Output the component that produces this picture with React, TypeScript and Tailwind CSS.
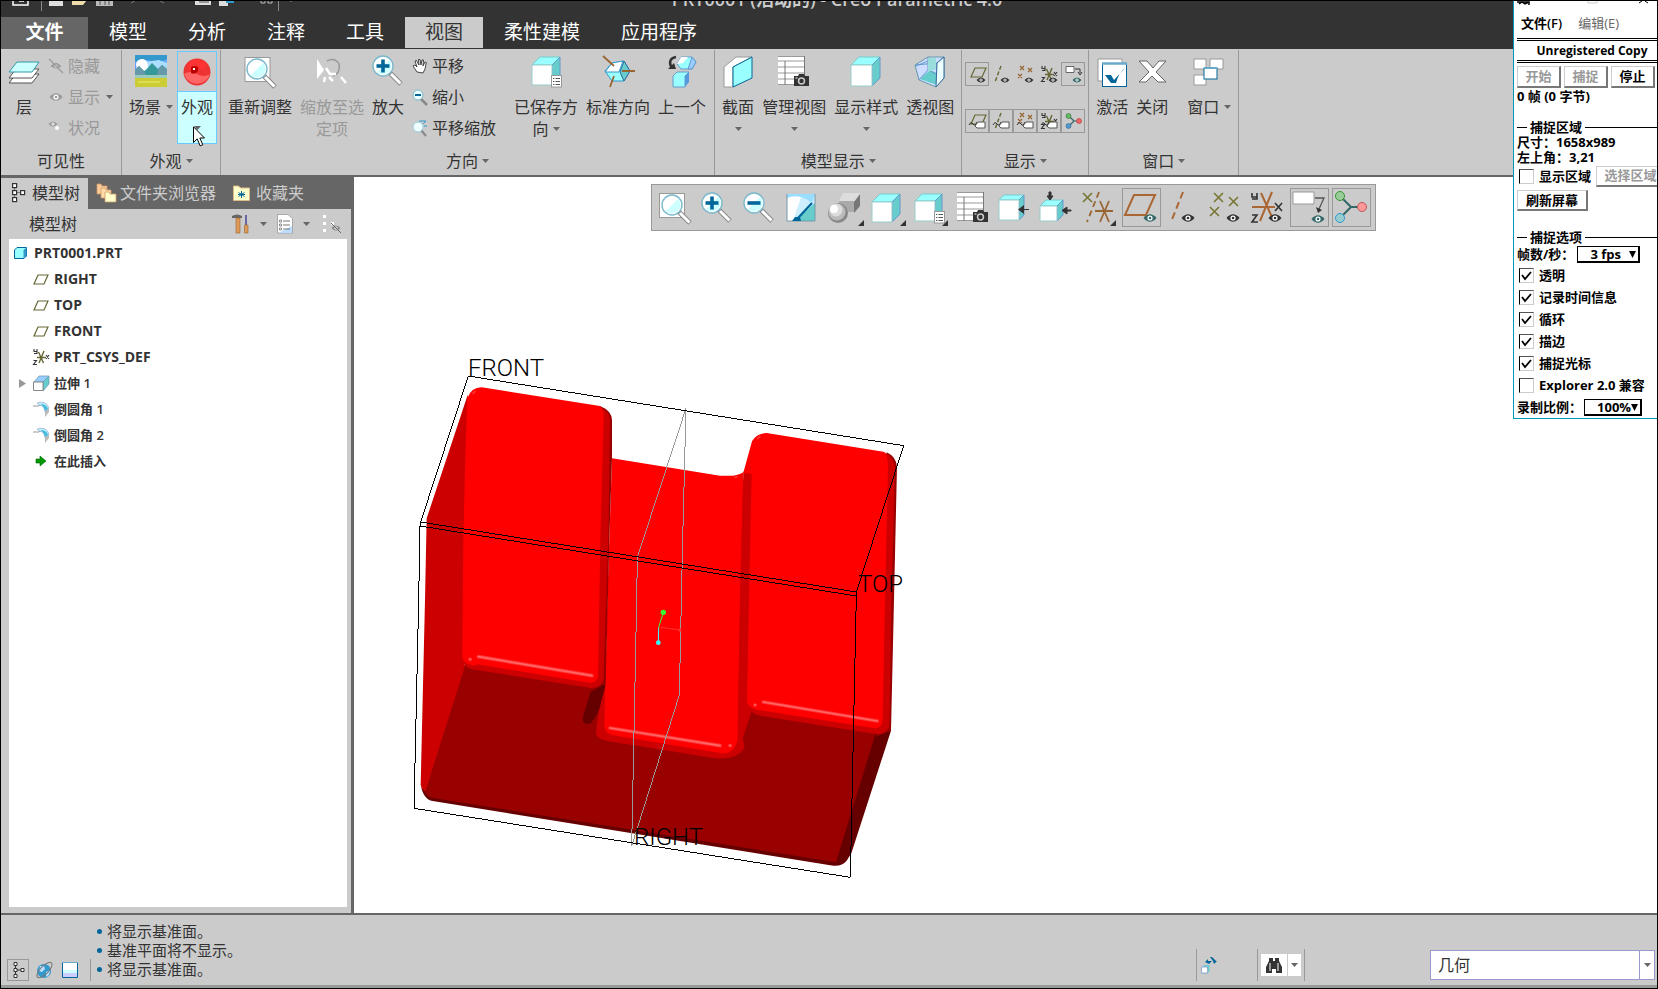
import type { ReactNode } from "react";

type IconProps = {
  w?: number;
  h?: number;
  children: ReactNode;
};

function Icon({ w = 32, h = 34, children }: IconProps) {
  return (
    <svg aria-hidden="true" width={w} height={h} viewBox={`0 0 ${w} ${h}`} fill="none" className="block shrink-0 overflow-visible">
      {children}
    </svg>
  );
}

function Chevron() {
  return (
    <svg aria-hidden="true" width="7" height="4" viewBox="0 0 7 4" className="shrink-0">
      <path d="M0 0h7L3.5 4z" fill="#666" />
    </svg>
  );
}

/* ---------- shared drawings ---------- */

function Eye({ x, y, color = "#333" }: { x: number; y: number; color?: string }) {
  return (
    <g transform={`translate(${x} ${y})`}>
      <path d="M-6.5 0Q0-7.5 6.5 0Q0 7.5-6.5 0z" fill={color} />
      <circle r="2.6" fill="#fff" />
      <circle r="1.3" fill={color} />
    </g>
  );
}

function SmallEye({ x, y, color = "#333" }: { x: number; y: number; color?: string }) {
  return (
    <g transform={`translate(${x} ${y})`}>
      <path d="M-4.5 0Q0-5 4.5 0Q0 5-4.5 0z" fill={color} />
      <circle r="1.6" fill="#fff" />
      <circle r=".7" fill={color} />
    </g>
  );
}

function Lens({ x, y, sign }: { x: number; y: number; sign?: "+" | "-" }) {
  return (
    <g transform={`translate(${x} ${y})`}>
      <path d="M7 7l11 11" stroke="#888" strokeWidth="5" />
      <path d="M8 8l9.5 9.5" stroke="#fff" strokeWidth="3" />
      <circle r="10" fill="#fff" stroke="#7ab8cc" strokeWidth="1.4" />
      <path d="M-6 6L6-6A8 8 0 0 1 4 7A8 8 0 0 1-6 6z" fill="#cff" />
      {sign && <path d="M-6.5 0h13" stroke="#069" strokeWidth="3.6" />}
      {sign === "+" && <path d="M0-6.5v13" stroke="#069" strokeWidth="3.6" />}
    </g>
  );
}

function Cube({ x, y, w, h, d }: { x: number; y: number; w: number; h: number; d: number }) {
  return (
    <g transform={`translate(${x} ${y})`} strokeWidth="1" strokeLinejoin="round">
      <path d={`M0 ${d}L${d} 0H${w + d}L${w} ${d}z`} fill="#9ff" stroke="#7cc" />
      <path d={`M${w} ${d}L${w + d} 0V${h}L${w} ${h + d}z`} fill="#6cc" stroke="#69c" />
      <rect y={d} width={w} height={h} fill="#fff" stroke="#9cc" />
    </g>
  );
}

function Camera({ x, y }: { x: number; y: number }) {
  return (
    <g transform={`translate(${x} ${y})`}>
      <path d="M0 2h4l1-2h5l1 2h4v10H0z" fill="#333" />
      <circle cx="7.5" cy="7" r="3.7" fill="#ccc" />
      <circle cx="7.5" cy="7" r="2.2" fill="#333" />
      <path d="M1.5 4h2" stroke="#fff" />
    </g>
  );
}

function ListBadge({ x, y }: { x: number; y: number }) {
  return (
    <g transform={`translate(${x} ${y})`}>
      <rect x=".5" y=".5" width="10" height="11.5" fill="#fff" stroke="#999" />
      <path d="M2 3.5h1.4M4.5 3.5H9M2 6.5h1.4M4.5 6.5H9M2 9.5h1.4M4.5 9.5H9" stroke="#555" />
    </g>
  );
}

function ViewTable({ x, y }: { x: number; y: number }) {
  return (
    <g transform={`translate(${x} ${y})`}>
      <rect width="27" height="29" fill="#fff" />
      <path d="M0 .5h27M0 5h27M0 11h27M0 17h27M0 23h27M0 28.5h18" stroke="#999" />
      <path d="M7 5v24M26.5 0v20" stroke="#777" />
      <Camera x={16} y={18} />
    </g>
  );
}

function Tag({ x, y }: { x: number; y: number }) {
  return (
    <g transform={`translate(${x} ${y})`}>
      <path d="M-6 3q2-4 4-1t4-2" stroke="#333" />
      <path d="M0 4l3-4h7v6H2z" fill="#fff" stroke="#555" />
    </g>
  );
}

function Triad() {
  return (
    <>
      <path d="M4 3l5 5-5 5M9 8h7" stroke="#366" strokeWidth="1.2" />
      <circle cx="3.5" cy="3" r="2.5" fill="#6b6" stroke="#363" strokeWidth=".6" />
      <circle cx="3.5" cy="13" r="2.5" fill="#59c" stroke="#369" strokeWidth=".6" />
      <circle cx="14" cy="8" r="2.5" fill="#e66" stroke="#a33" strokeWidth=".6" />
    </>
  );
}

function Csys({ color = "#996633" }: { color?: string }) {
  return (
    <>
      <path d="M4 8.5h9M6 14l5-12M5.5 3l5 11" stroke={color} strokeWidth="1.4" />
      <path d="M1 0v2.500h3M4 0v4.500h-3M13 6l3 4m0-4l-3 4M.5 11.500h3l-3 4h3.500" stroke="#333" strokeWidth="1.1" />
    </>
  );
}

function TreeNodes() {
  return (
    <g stroke="#333" fill="#fff" strokeWidth="1.2">
      <path d="M2.500 4v11M3 9.500h6" stroke="#777" />
      <rect x=".6" y=".6" width="4" height="4" />
      <rect x=".6" y="7.600" width="4" height="4" />
      <rect x=".6" y="14.600" width="4" height="4" />
      <rect x="8.600" y="7.600" width="4" height="4" />
    </g>
  );
}

/* ---------- ribbon ---------- */

type BigButtonProps = {
  icon: ReactNode;
  label: string;
  second?: string;
  menu?: "side" | "below";
  disabled?: boolean;
};

function BigButton({ icon, label, second, menu, disabled }: BigButtonProps) {
  return (
    <button
      type="button"
      disabled={disabled}
      className={`flex shrink-0 flex-col items-center pt-[5px] text-base leading-[22px] ${disabled ? "text-[#999]" : "text-[#333]"}`}
    >
      <span className="mb-[7px]">{icon}</span>
      <span className="flex items-center gap-[5px]">
        {label}
        {menu === "side" && <Chevron />}
      </span>
      <span className="flex h-[22px] items-center gap-1">
        {second}
        {menu === "below" && <Chevron />}
      </span>
    </button>
  );
}

function SmallButton({ icon, label, menu, disabled }: { icon: ReactNode; label: string; menu?: boolean; disabled?: boolean }) {
  return (
    <button
      type="button"
      disabled={disabled}
      className={`flex h-[31px] items-center text-base leading-[22px] ${disabled ? "text-[#999]" : "text-[#333]"}`}
    >
      <span className="mr-1 w-4">{icon}</span>
      {label}
      {menu && (
        <span className="ml-1.5 flex">
          <Chevron />
        </span>
      )}
    </button>
  );
}

function Group({ title, menu, className = "", children }: { title: string; menu?: boolean; className?: string; children: ReactNode }) {
  return (
    <section className="mt-px flex shrink-0 flex-col border-r border-[#999]">
      <div className={`flex h-[97px] items-start ${className}`}>{children}</div>
      <h2 className="flex h-7 items-center justify-center gap-1 text-base leading-[22px]">
        {title}
        {menu && <Chevron />}
      </h2>
    </section>
  );
}

const layersIcon = (
  <Icon>
    <g stroke="#555">
      <path d="M1 28l7-9h23l-7 9z" fill="#fff" />
      <path d="M1 23l7-9h23l-7 9z" fill="#fff" />
      <path d="M1 17L9 7h22l-7 10z" fill="#cff" stroke="#39a" />
    </g>
  </Icon>
);

const sceneIcon = (
  <Icon>
    <rect width="32" height="32" fill="#69f" />
    <path d="M0 0h32v7H0z" fill="#39c" />
    <path d="M0 7q8-4 16-1t16-2v4H0z" fill="#6af" />
    <path d="M9 7l15-2 8 3v10H6z" fill="#adf" />
    <path d="M1 9q1-5 7-5 5 1 5 8l-3 4H2z" fill="#fff" />
    <path d="M0 20V15l4-4 5 5 2-1 6-7 6 6 4-4 5 4v6z" fill="#399" />
    <path d="M0 15l4-4 5 5 2 4H0zM23 14l4-4 5 4v6H22z" fill="#69a" />
    <path d="M0 20h32v12H0z" fill="#cc3" />
    <path d="M0 20h32v3H0z" fill="#9cb" />
    <path d="M3 26h22v2H3z" fill="#dd5" />
  </Icon>
);

const fitIcon = (
  <Icon>
    <rect x="1" y="2.500" width="25" height="24" fill="#fff" stroke="#999" />
    <Lens x={13} y={14} />
  </Icon>
);

const zoomSelIcon = (
  <Icon>
    <path d="M1 4v20l7-9z" fill="#fff" />
    <path d="M11 6q8-4 12 3 2 9-6 12" stroke="#999" strokeWidth="1.500" />
    <path d="M10 13l4 6h6M9 22l-1 5M13 22l4 4M25 22l5 6" stroke="#fff" strokeWidth="2.500" />
  </Icon>
);

const savedIcon = (
  <Icon>
    <Cube x={2} y={2} w={20} h={20} d={8} />
    <ListBadge x={21} y={20} />
  </Icon>
);

const stdIcon = (
  <Icon>
    <path d="M10 8l12-2 6 10-6 10H10L3 16z" fill="#9ff" stroke="#39c" />
    <path d="M22 6l6 10-6 10-4-9z" fill="#6cc" stroke="#369" />
    <path d="M3 17l7-9 11-2-4 11z" fill="#fff" stroke="#39c" />
    <path d="M1 1l11 10M20 16h13M12 21L8 32" stroke="#963" strokeWidth="1.800" />
  </Icon>
);

const prevIcon = (
  <Icon>
    <path d="M10 2C3 3 3 9 6 13" stroke="#333" strokeWidth="2.500" />
    <path d="M2 14l8 0-2-6z" fill="#333" />
    <path d="M11 9l4-7h11l4 5-4 7H15z" fill="#9ff" stroke="#69c" />
    <path d="M11 9l4-7h7l-5 6z" fill="#fff" />
    <path d="M22 14l4-12 4 5-4 7z" fill="#9cf" stroke="#69c" />
    <path d="M7 21l4-4h12l-4 4v11H7z" fill="#9ff" stroke="#69c" />
    <path d="M19 21l4-4v10l-4 5z" fill="#59d" />
  </Icon>
);

const sectionIcon = (
  <Icon>
    <path d="M2 12L14 2h16L11 12v20H2z" fill="#fff" stroke="#999" />
    <path d="M11 12L30 2v21L11 32z" fill="#9ff" stroke="#069" />
  </Icon>
);

const perspectiveIcon = (
  <Icon>
    <path d="M1 10L14 2h16v21l-8 9-17-7z" fill="#cdf" stroke="#69a" />
    <path d="M6 24l10-9 7 3v12z" fill="#6cc" />
    <path d="M1 10l22-2 7-6M23 8v22M14 2v13L5 25M14 15l16 8M2 11l12-5" stroke="#69c" />
    <path d="M14 3h8v11l-8 3z" fill="#9dd" />
    <path d="M23 8l7-6v21l-8 9z" fill="#eff" stroke="#369" />
  </Icon>
);

const activateIcon = (
  <Icon>
    <path d="M2 4h24v22H2z" fill="#fff" stroke="#999" />
    <rect x="6.500" y="8.500" width="24" height="23" fill="#fff" stroke="#069" />
    <path d="M6 8.500h25" stroke="#6ac" strokeWidth="2.500" />
    <path d="M9 20h6l3 5 11-12q-6 4-9 15h-5z" fill="#069" />
  </Icon>
);

const closeIcon = (
  <Icon>
    <path d="M3 6h8l6 7 6-7h7L20 17l10 10h-8l-6-6-6 6H3l10-10z" fill="#fff" stroke="#666" />
  </Icon>
);

const windowsIcon = (
  <Icon>
    <g fill="#fff" stroke="#999">
      <path d="M1 4h12v10H1zM17 4h13v10H17zM1 20h12v10H1z" />
      <rect x="11" y="13" width="13" height="11" stroke="#069" />
    </g>
    <path d="M11 13h13" stroke="#6ac" strokeWidth="2" />
  </Icon>
);

const planePath = "M6 2h11l-4 9H2z";

const displayRows: { id: string; boxed: boolean; art: ReactNode }[][] = [
  [
    { id: "plane", boxed: true, art: <><path d={planePath} stroke="#663" strokeWidth="1.200" /><SmallEye x={12} y={14} /></> },
    { id: "axis", boxed: false, art: <><path d="M8 0L2 16" stroke="#663" strokeWidth="1.400" strokeDasharray="4 2" /><SmallEye x={12} y={14} /></> },
    { id: "point", boxed: false, art: <><path d="M3 0l4 4m0-4L3 4M11 2l4 4m0-4l-4 4M1 8l4 4m0-4l-4 4" stroke="#963" strokeWidth="1.300" /><SmallEye x={12} y={14} /></> },
    { id: "csys", boxed: false, art: <><Csys color="#663" /><SmallEye x={12} y={14} /></> },
    { id: "note", boxed: true, art: <><path d="M1 .5h8v6H1z" fill="#fff" stroke="#666" /><path d="M10 3h5v4m-2-1l2 3 2-3" stroke="#333" /><SmallEye x={12} y={14} color="#366" /></> },
  ],
  [
    { id: "plane-tag", boxed: true, art: <><path d={planePath} stroke="#663" strokeWidth="1.200" /><Tag x={6} y={9} /></> },
    { id: "axis-tag", boxed: true, art: <><path d="M8 0L2 16" stroke="#663" strokeWidth="1.400" strokeDasharray="4 2" /><Tag x={6} y={9} /></> },
    { id: "point-tag", boxed: true, art: <><path d="M3 0l4 4m0-4L3 4M11 2l4 4m0-4l-4 4M1 6l4 4m0-4l-4 4" stroke="#963" strokeWidth="1.300" /><Tag x={6} y={9} /></> },
    { id: "csys-tag", boxed: true, art: <><Csys color="#663" /><Tag x={6} y={9} /></> },
    { id: "spin", boxed: true, art: <Triad /> },
  ],
];

function Ribbon() {
  return (
    <div className="flex h-32 border-b-2 border-[#666] bg-[#cbcbcb]">
      <Group title="可见性" className="w-[120px] pl-[7px]">
        <BigButton icon={layersIcon} label="层" />
        <div className="ml-2 flex flex-col">
          <SmallButton
            disabled
            label="隐藏"
            icon={<Icon w={16} h={16}><SmallEye x={8} y={8} color="#999" /><path d="M1 1l14 14M3 9q5-7 10 0" stroke="#999" strokeWidth="1.200" /></Icon>}
          />
          <SmallButton disabled menu label="显示" icon={<Icon w={16} h={16}><Eye x={8} y={8} color="#999" /></Icon>} />
          <SmallButton disabled label="状况" icon={<Icon w={16} h={16}><SmallEye x={5} y={4} color="#999" /><circle cx="9" cy="8" r="2" fill="#fff" /></Icon>} />
        </div>
      </Group>

      <Group title="外观" menu className="w-[98px] pl-[7px]">
        <BigButton icon={sceneIcon} label="场景" menu="side" />
        <button type="button" className="relative ml-1 mt-px flex w-10 shrink-0 flex-col items-center border border-[#6cf] text-base leading-[22px]">
          <span className="flex h-10 w-full items-center justify-center border-b border-[#6cf]">
            <Icon w={28} h={28}>
              <circle cx="14" cy="14" r="13.500" fill="#e33" />
              <path d="M1 16q6-4 13 0t13 0a13.500 13.500 0 0 1-26 0z" fill="#f66" />
              <path d="M4 6q9-9 20 0l-4 6q-6-5-15 0z" fill="#f33" />
              <path d="M8 9q3-2 7 0v4q-3 4-7 2z" fill="#b00" />
              <path d="M10 10h2v2h-2z" fill="#fff" />
            </Icon>
          </span>
          <span className="flex h-[51px] w-full flex-col items-center bg-[#cff] pt-1">
            <span>外观</span>
            <span className="flex h-5 items-center">
              <Chevron />
            </span>
          </span>
          <svg aria-hidden="true" width="12" height="21" viewBox="0 0 12 21" className="pointer-events-none absolute left-[15px] top-[74px]">
            <path d="M.5.8v15.700l3.700-3.600 3 7 2.600-1.200-3-6.700h4.700z" fill="#fff" stroke="#000" />
          </svg>
        </button>
      </Group>

      <Group title="方向" menu className="gap-2 pl-[7px] pr-2">
        <BigButton icon={fitIcon} label="重新调整" />
        <BigButton icon={zoomSelIcon} label="缩放至选" second="定项" disabled />
        <BigButton icon={<Icon><Lens x={11} y={11} sign="+" /></Icon>} label="放大" />
        <div className="mr-2.5 flex flex-col">
          <SmallButton
            label="平移"
            icon={<Icon w={16} h={16}><path d="M5 14L1 8l2-1 2 2-2-6 1.500-.5L7 7l-.5-5.500H8L9 7l1-5h1.500L11 8l2-4 1.300.5L13 11l-2 4z" fill="#fff" stroke="#333" strokeWidth=".9" /></Icon>}
          />
          <SmallButton
            label="缩小"
            icon={<Icon w={16} h={16}><path d="M9 10l6 6" stroke="#888" strokeWidth="2.500" /><circle cx="6" cy="6" r="5" fill="#eff" stroke="#7ab8cc" /><path d="M3 6h6" stroke="#069" strokeWidth="2" /></Icon>}
          />
          <SmallButton
            label="平移缩放"
            icon={<Icon w={16} h={16}><path d="M9 10l5 6" stroke="#888" strokeWidth="2" /><circle cx="6" cy="7" r="5" fill="#eff" stroke="#9cd" /><path d="M7 1h7l-3 3M12 6l3 0" stroke="#39c" /></Icon>}
          />
        </div>
        <BigButton icon={savedIcon} label="已保存方" second="向" menu="below" />
        <BigButton icon={stdIcon} label="标准方向" />
        <BigButton icon={prevIcon} label="上一个" />
      </Group>

      <Group title="模型显示" menu className="gap-2 px-[7px]">
        <BigButton icon={sectionIcon} label="截面" menu="below" />
        <BigButton icon={<Icon><ViewTable x={0} y={1} /></Icon>} label="管理视图" menu="below" />
        <BigButton icon={<Icon><Cube x={1} y={2} w={21} h={21} d={8} /></Icon>} label="显示样式" menu="below" />
        <BigButton icon={perspectiveIcon} label="透视图" />
      </Group>

      <Group title="显示" menu className="flex-col gap-[23px] px-[3px] pt-3">
        {displayRows.map((row, rowIndex) => (
          <div key={rowIndex} className="flex">
            {row.map((item) => (
              <button
                key={item.id}
                type="button"
                aria-label={item.id}
                className={`grid size-6 place-items-center border ${item.boxed ? "border-[#999]" : "border-transparent"}`}
              >
                <Icon w={17} h={17}>{item.art}</Icon>
              </button>
            ))}
          </div>
        ))}
      </Group>

      <Group title="窗口" menu className="gap-2 px-[7px]">
        <BigButton icon={activateIcon} label="激活" />
        <BigButton icon={closeIcon} label="关闭" />
        <div className="ml-[11px]">
          <BigButton icon={windowsIcon} label="窗口" menu="side" />
        </div>
      </Group>
    </div>
  );
}

/* ---------- header ---------- */

const tabs = ["模型", "分析", "注释", "工具", "视图", "柔性建模", "应用程序"];

function Header() {
  return (
    <header className="h-12 bg-[#333]">
      <div className="grid h-4 grid-cols-[1fr_auto_1fr] overflow-hidden">
        <svg aria-hidden="true" width="300" height="11" viewBox="1 1 300 11" fill="none">
          <path d="M13 0v5h15V0M19 1h5" stroke="#fff" strokeWidth="1.500" />
          <path d="M41.500 0v11M278.500 0v11" stroke="#888" />
          <path d="M49 0h14v6H49zM195 0h16v5H195zM219 0h9v6H219z" fill="#ddd" />
          <path d="M72 0h15l-4 5H72z" fill="#eda" />
          <path d="M96 0h17v6H96z" fill="#bbb" />
          <path d="M100 1v4M105 1v4M109 1v4M199 2h10" stroke="#555" />
          <path d="M226 0h8v3h-8z" fill="#39c" />
          <path d="M131 3l4-2M160 1l4 2" stroke="#777" />
          <path d="M261 0h4v3h-4zM268 0h4v3h-4z" stroke="#bbb" />
          <path d="M290 1h2" stroke="#999" />
        </svg>
        <h1 className="-mt-2.5 pl-4 text-lg font-semibold leading-4 text-[#ccc]">PRT0001 (活动的) - Creo Parametric 4.0</h1>
      </div>
      <nav className="flex h-8 gap-px text-[19px] leading-[28px] text-white">
        <button type="button" className="w-[87px] shrink-0 bg-[#666] pb-0.5 font-bold">
          文件
        </button>
        {tabs.map((tab) => (
          <button
            key={tab}
            type="button"
            className={`shrink-0 px-5 pb-0.5 ${tab === "视图" ? "border-b border-[#333] bg-[#cbcbcb] text-[#333]" : ""}`}
          >
            {tab}
          </button>
        ))}
      </nav>
    </header>
  );
}

/* ---------- model tree ---------- */

const planeIcon = (
  <Icon w={16} h={16}>
    <path d="M5 4h10l-4 9H1z" stroke="#663" strokeWidth="1.200" />
  </Icon>
);

const roundIcon = (
  <Icon w={16} h={16}>
    <path d="M0 5h6l4-3" stroke="#999" />
    <path d="M4 2q9-3 12 5l-4 4q-1-7-6-7z" fill="#bef" stroke="#9ac" strokeWidth=".7" />
    <path d="M12 11l4-4v4l-4 5z" fill="#bbb" />
    <path d="M9 3q5 1 6 5l-3 2q-1-5-4-6z" fill="#4bd" />
  </Icon>
);

const treeItems: { label: string; zh?: boolean; expandable?: boolean; icon: ReactNode }[] = [
  { label: "RIGHT", icon: planeIcon },
  { label: "TOP", icon: planeIcon },
  { label: "FRONT", icon: planeIcon },
  { label: "PRT_CSYS_DEF", icon: <Icon w={16} h={16}><Csys color="#663" /></Icon> },
  {
    label: "拉伸 1",
    zh: true,
    expandable: true,
    icon: (
      <Icon w={16} h={16}>
        <path d="M1 7l5-6h10l-6 6z" fill="#9cf" stroke="#69a" strokeWidth=".7" />
        <path d="M10 7l6-6v8l-6 7z" fill="#6cc" stroke="#69a" strokeWidth=".7" />
        <path d="M.5 7h9.500v8.500H.5z" fill="#fff" stroke="#888" />
      </Icon>
    ),
  },
  { label: "倒圆角 1", zh: true, icon: roundIcon },
  { label: "倒圆角 2", zh: true, icon: roundIcon },
  {
    label: "在此插入",
    zh: true,
    icon: (
      <Icon w={16} h={16}>
        <path d="M3 6h4V3l6 5-6 5v-3H3z" fill="#090" stroke="#060" strokeWidth=".6" />
      </Icon>
    ),
  },
];

function ModelTree() {
  return (
    <aside className="flex w-[353px] shrink-0 flex-col border-r-3 border-[#666] bg-[#cbcbcb]">
      <div className="flex h-8 shrink-0 bg-[#666] pt-px text-base leading-[22px] text-[#ccc]">
        <button type="button" className="flex w-[87px] items-center gap-1.5 bg-[#cbcbcb] pb-0.5 pl-[11px] text-[#333]">
          <Icon w={14} h={20}>
            <TreeNodes />
          </Icon>
          模型树
        </button>
        <button type="button" className="ml-[9px] flex items-center gap-1 pb-0.5">
          <Icon w={19} h={19}>
            <g fill="#ffc" stroke="#c96" strokeWidth=".8">
              <path d="M0 1h4l1 2h5v8H0z" fill="#fc9" />
              <path d="M4 5h4l1 2h5v8H4z" fill="#fda" />
              <path d="M8 9h4l1 2h6v8H8z" />
            </g>
          </Icon>
          文件夹浏览器
        </button>
        <button type="button" className="ml-[17px] flex items-center gap-1.5 pb-0.5">
          <Icon w={17} h={16}>
            <path d="M.5 1h5l2 2H16.500v12.500H.5z" fill="#ffc" stroke="#db8" />
            <path d="M8.500 6v7M5.500 7.500l6 4M11.500 7.500l-6 4M5 9.500h7" stroke="#069" />
          </Icon>
          收藏夹
        </button>
      </div>
      <div className="flex h-[30px] shrink-0 items-center pl-7 pr-2 text-base leading-[22px]">
        <h2 className="flex-1">模型树</h2>
        <button type="button" aria-label="设置" className="flex items-center gap-2.5">
          <Icon w={18} h={20}>
            <path d="M0 2q5-3 10 0v2H0z" fill="#666" />
            <path d="M4 4h4v15H4z" fill="#d95" stroke="#963" strokeWidth=".6" />
            <path d="M14 1v10" stroke="#449" strokeWidth="1.500" />
            <path d="M12.500 11h3.500v8h-3.500z" fill="#d95" stroke="#963" strokeWidth=".6" />
          </Icon>
          <Chevron />
        </button>
        <button type="button" aria-label="显示" className="ml-2.5 flex items-center gap-2.5">
          <Icon w={16} h={20}>
            <path d="M.5.5H11l4.500 4V19H.5z" fill="#fff" stroke="#999" strokeWidth=".8" />
            <path d="M1 19l14-7v7z" fill="#bdf" />
            <path d="M6 7h7M6 11h7M6 15h7" stroke="#777" />
            <path d="M2.500 6h2v2h-2zM2.500 10h2v2h-2zM2.500 14h2v2h-2z" stroke="#777" strokeWidth=".8" />
          </Icon>
          <Chevron />
        </button>
        <button type="button" aria-label="隐藏" className="ml-3">
          <Icon w={21} h={20}>
            <path d="M1 1h3v3H1zM1 8h3v3H1zM1 15h3v3H1zM9 8h3v3H9z" fill="#fff" />
            <SmallEye x={14} y={14} color="#888" />
            <path d="M9 9l10 10" stroke="#666" />
          </Icon>
        </button>
      </div>
      <ul className="mb-1.5 ml-2 mr-1 flex-1 bg-white pt-px text-sm font-bold leading-5">
        <li className="flex h-[26px] items-center gap-[7px] pl-[5px]">
          <Icon w={13} h={12}>
            <path d="M.5 3L3 .5h9.500V9L10 11.500H.5z" fill="#9ff" stroke="#069" />
            <path d="M9.500 3L12.500.5V9l-3 2.500z" fill="#39c" />
          </Icon>
          PRT0001.PRT
        </li>
        {treeItems.map((item) => (
          <li key={item.label} className={`flex h-[26px] items-center ${item.zh ? "text-[13px] font-semibold" : ""}`}>
            <span className="flex w-6 justify-center pl-2.5">
              {item.expandable && (
                <svg aria-hidden="true" width="7" height="9" viewBox="0 0 7 9" className="mr-2 shrink-0">
                  <path d="M0 0l7 4.500L0 9z" fill="#999" />
                </svg>
              )}
            </span>
            <span className="mr-[5px]">{item.icon}</span>
            {item.label}
          </li>
        ))}
      </ul>
    </aside>
  );
}

/* ---------- graphics area ---------- */

const corner = <path d="M36 32v6h-6z" fill="#333" />;

const viewTools: { id: string; boxed?: boolean; art: ReactNode }[] = [
  { id: "refit", art: <><rect x="-.5" y="5.500" width="25" height="24" fill="#fff" stroke="#999" /><Lens x={12} y={17} /></> },
  { id: "zoom-in", art: <Lens x={10} y={15} sign="+" /> },
  { id: "zoom-out", art: <Lens x={10} y={15} sign="-" /> },
  {
    id: "repaint",
    art: (
      <>
        <path d="M1 6h28v27H1z" fill="#fff" />
        <path d="M16 6h13v27H7z" fill="#cef" />
        <path d="M29 15v18H8z" fill="#6cc" />
        <path d="M1 6h28L26 15Q14 5 1 10z" fill="#9df" />
        <path d="M1 6v27h28V6" stroke="#79a" />
        <path d="M26 15L12 30" stroke="#069" strokeWidth="2.200" />
        <path d="M6 33l3-4h5l1 4z" fill="#069" />
      </>
    ),
  },
  {
    id: "shade",
    art: (
      <>
        <path d="M11 13l4-8h17v3l-6 7H12z" fill="#ddd" />
        <path d="M11 13h15v11H12z" fill="#aaa" />
        <path d="M26 14l6-8v12l-6 7z" fill="#777" />
        <circle cx="10" cy="25" r="10" fill="#888" />
        <circle cx="9" cy="24" r="8.500" fill="#bbb" />
        <circle cx="8" cy="22" r="6.500" fill="#ddd" />
        <circle cx="6" cy="21" r="4" fill="#fff" />
        {corner}
      </>
    ),
  },
  { id: "style", art: <><Cube x={2} y={6} w={20} h={20} d={8} />{corner}</> },
  { id: "saved", art: <><Cube x={3} y={6} w={20} h={20} d={7} /><ListBadge x={22} y={23} />{corner}</> },
  { id: "views", art: <ViewTable x={3} y={4} /> },
  {
    id: "clip-back",
    art: (
      <>
        <Cube x={3} y={7} w={20} h={20} d={5} />
        <path d="M33 22h-5v4l-6-4.500 6-4.500v4h5z" fill="#333" />
      </>
    ),
  },
  {
    id: "clip",
    art: (
      <>
        <Cube x={2} y={12} w={17} h={15} d={6} />
        <path d="M13 4v4h2l-3 4-3-4h2V4zM33 23h-4v3l-5-3.500 5-3.500v3h4z" fill="#333" stroke="#333" />
      </>
    ),
  },
  {
    id: "datum",
    art: (
      <>
        <path d="M3 5l9 9m0-9l-9 9" stroke="#773" strokeWidth="1.600" />
        <path d="M19 4L7 34" stroke="#963" strokeWidth="1.800" strokeDasharray="6 4" />
        <path d="M15 23h18M20 34l9-21M20 13l9 21" stroke="#963" strokeWidth="1.800" />
        {corner}
      </>
    ),
  },
  { id: "planes", boxed: true, art: <><path d="M12 7h21l-9 20H3z" stroke="#a63" strokeWidth="2" /><Eye x={28} y={30} color="#366" /></> },
  { id: "axes", art: <><path d="M19 4L7 34" stroke="#a63" strokeWidth="2" strokeDasharray="7 4" /><Eye x={24} y={30} /></> },
  { id: "points", art: <><path d="M8 5l9 9m0-9l-9 9M23 9l9 9m0-9l-9 9M4 19l9 9m0-9l-9 9" stroke="#773" strokeWidth="1.600" /><Eye x={27} y={30} /></> },
  {
    id: "csys",
    art: (
      <>
        <path d="M4 19h23M12 33L24 4M13 5l11 24" stroke="#a63" strokeWidth="2" />
        <path d="M4 5v4h5M9 5v6H4M27 15l7 8m0-8l-7 8M4 27h5l-5 7h6" stroke="#333" strokeWidth="1.600" />
        <Eye x={27} y={30} />
      </>
    ),
  },
  {
    id: "notes",
    boxed: true,
    art: (
      <>
        <path d="M3 4h21v12H3z" fill="#fff" stroke="#999" />
        <path d="M25 10h9l-5 11" stroke="#555" strokeWidth="1.300" />
        <path d="M26 19l6 3-4 3z" fill="#333" />
        <Eye x={28} y={31} color="#366" />
      </>
    ),
  },
  {
    id: "spin-center",
    boxed: true,
    art: (
      <>
        <path d="M8 8l11 11L8 30M19 19h11" stroke="#366" strokeWidth="2" />
        <circle cx="8" cy="8" r="4.500" fill="#9c9" stroke="#393" />
        <circle cx="8" cy="30" r="4.500" fill="#9cc" stroke="#39c" />
        <circle cx="30" cy="19" r="4.500" fill="#f99" stroke="#b55" />
      </>
    ),
  },
];

function Viewport() {
  return (
    <main className="min-w-0 flex-1 bg-white">
      <div className="flex justify-center pl-[15px] pt-[7px]">
        <div className="flex gap-[3px] border border-[#999] bg-[#cbcbcb] py-[3px] pl-2 pr-1">
          {viewTools.map((tool) => (
            <button
              key={tool.id}
              type="button"
              aria-label={tool.id}
              className={`grid size-[39px] place-items-center border ${tool.boxed ? "border-[#999]" : "border-transparent"}`}
            >
              <Icon w={37} h={37}>
                <g transform="translate(-1 -1)">{tool.art}</g>
              </Icon>
            </button>
          ))}
        </div>
      </div>
      <svg role="img" aria-label="PRT0001" width="520" height="550" viewBox="0 0 520 550" fill="none" className="ml-[46px] mt-[109px]">
        <g transform="scale(.33333)">
          {/* right side and bottom edge */}
          <path d="M78 1352Q62 1345 62 1335Q70 1378 98 1383L1300 1577Q1325 1580 1340 1562L1354 1540L1473 1172V1140L1300 1200z" fill="#600" />
          {/* underside */}
          <path d="M193 975L74 1355Q84 1372 100 1374L1308 1567L1427 1180L1200 1000H400z" fill="#900" />
          {/* left side */}
          <path d="M203 165L80 535L75 780L62 1335Q66 1350 76 1354L193 985V900L240 300z" fill="#c00" />
          <path d="M572 1055L618 1030L603 1090Q592 1130 572 1150Q545 1158 549 1130z" fill="#600" />
          {/* middle face */}
          <path d="M620 1000L616 1040Q590 1130 588 1180Q592 1198 622 1203L945 1255Q1015 1260 1034 1222L1028 1195L1054 1115L1070 420L1020 420L636 600z" fill="#c00" />
          <path d="M636 355L960 407H1000Q1020 404 1030 397L1020 780L1013 1190Q1010 1240 965 1240L640 1186Q614 1182 613 1155L622 780z" fill="#f00" />
          {/* left pillar */}
          <path d="M600 198Q635 212 636 240V355L628 600L617 1038L600 1030z" fill="#900" />
          <path d="M560 195Q628 200 630 240L625 600L610 1020Q600 1045 572 1044L225 989Q190 985 188 960L400 940z" fill="#c00" />
          <path d="M202 175Q213 142 245 142L600 198Q611 206 611 230L601 600L594 1010Q590 1030 568 1028L232 973Q222 980 212 974Q190 970 187 950L190 600L196 350z" fill="#f00" />
          {/* right pillar */}
          <path d="M1030 395L1056 380L1070 400L1056 500L1041 1110L1013 1180L1020 780z" fill="#c00" />
          <path d="M1460 337Q1488 350 1491 380L1482 780L1473 1172L1427 1190L1460 1100z" fill="#900" />
          <path d="M1450 335Q1484 350 1485 385L1474 780L1468 1160Q1455 1185 1427 1182L1080 1127Q1045 1120 1041 1090L1400 1080z" fill="#c00" />
          <path d="M1030 398L1056 304Q1070 279 1100 279L1450 335Q1465 342 1464 385L1455 780L1448 1140Q1445 1168 1420 1164L1090 1112Q1045 1108 1041 1085L1047 780L1055 402z" fill="#f00" />
          {/* highlights */}
          <g stroke="#f33" strokeWidth="11" strokeLinecap="round">
            <path d="M235 950L576 1007M630 1164L960 1217M1090 1086L1432 1143M210 958h1M990 1217h1M1065 1095h1" />
          </g>
          <g stroke="#f66" strokeWidth="5" strokeLinecap="round">
            <path d="M235 950L576 1007M630 1164L960 1217M1090 1086L1432 1143M210 958h1M990 1217h1M1065 1095h1" />
            <path d="M219 160l6-6M1073 296l6-6M1005 413l6-3" stroke="#f33" />
          </g>
          {/* datum planes */}
          <g strokeWidth="3" shapeRendering="crispEdges">
            <path d="M858 205L712 652L710 780L695 1518L838 1065L844 780L848 600z" stroke="#999" />
            <path d="M205 108L1511 317L1369 756L62 546zM60 558L1369 768L1351 1612L42 1405L56 780zM62 546L60 558M1369 756V768" stroke="#000" />
          </g>
          {/* spin centre */}
          <path d="M782 862L840 870" stroke="#f33" strokeWidth="3" />
          <path d="M790 817L776 862" stroke="#3f3" strokeWidth="3" />
          <path d="M776 862L775 908" stroke="#3ff" strokeWidth="3" />
          <circle cx="790" cy="817" r="8" fill="#3f3" />
          <circle cx="775" cy="908" r="7" fill="#3ff" />
          <circle cx="840" cy="870" r="5" fill="#f33" />
        </g>
        <g fill="#000" className="font-['Roboto','Liberation_Sans',sans-serif] text-[24px] font-light">
          <text x="68" y="36">FRONT</text>
          <text x="458" y="252">TOP</text>
          <text x="234" y="505">RIGHT</text>
        </g>
      </svg>
    </main>
  );
}

/* ---------- status bar ---------- */

const messages = ["将显示基准面。", "基准平面将不显示。", "将显示基准面。"];

function StatusBar() {
  return (
    <footer className="flex h-[75px] shrink-0 items-end border-b-3 border-t-2 border-b-[#999] border-t-[#666] bg-[#cbcbcb] pb-1">
      <div className="flex items-center pl-1.5">
        <button type="button" aria-label="模型树" className="grid size-[22px] place-items-center border border-[#999]">
          <Icon w={12} h={16}>
            <g stroke="#333" fill="#fff">
              <path d="M3.500 4v9M5 8h4" />
              <path d="M2 .5h3v3H2zM2 6.500h3v3H2zM2 12.500h3v3H2zM9 6.500h3v3H9z" />
            </g>
          </Icon>
        </button>
        <button type="button" aria-label="浏览器" className="ml-[7px]">
          <Icon w={17} h={17}>
            <circle cx="8" cy="9" r="7" fill="#39c" />
            <path d="M4 4l4 0 1 3-3 3-3-1zM10 10l4-2-1 5-3 2z" fill="#bdf" />
            <ellipse cx="8.500" cy="8" rx="10" ry="4" transform="rotate(-45 8.500 8)" stroke="#777" />
          </Icon>
        </button>
        <button type="button" aria-label="全屏" className="ml-[9px] mr-3">
          <Icon w={16} h={16}>
            <path d="M.5.5h15v15H.5z" fill="#fff" stroke="#069" />
            <path d="M1 8h14v3H1z" fill="#cff" />
            <path d="M1 11h14v4H1z" fill="#ccf" />
            <path d="M0 .5h16" stroke="#6ac" />
          </Icon>
        </button>
        <span className="h-[22px] w-px bg-[#999]" />
      </div>
      <ul className="mb-0.5 ml-1.5 flex-1 text-[15px] leading-[19px]">
        {messages.map((message, index) => (
          <li key={index} className="flex items-center gap-[5px]">
            <span className="size-[5px] rounded-full bg-[#069]" />
            {message}
          </li>
        ))}
      </ul>
      <div className="flex items-center pr-0.5">
        <span className="h-8 w-px bg-[#999]" />
        <button type="button" aria-label="几何变换" className="ml-1 mr-10">
          <Icon w={16} h={17}>
            <path d="M.5 10l3-2h5v6l-2 2.500h-6z" fill="#6cc" />
            <path d="M.5 10h6v6h-6z" fill="#fff" stroke="#9ac" />
            <path d="M4 5l3-3v2l4 0-3 3zM9 0l2 0 4 4h1l-3 3-1-3z" fill="#069" />
          </Icon>
        </button>
        <span className="h-8 w-px bg-[#999]" />
        <button type="button" aria-label="查找" className="ml-[3px] grid h-[22px] w-[26px] place-items-center bg-white">
          <Icon w={16} h={15}>
            <path d="M3 0h4v3h2V0h4v3l3 6v6h-6v-4H6v4H0V9l3-6z" fill="#333" />
            <path d="M3 5h2v8H3zM11 5h2v8h-2z" fill="#999" />
          </Icon>
        </button>
        <button type="button" aria-label="查找选项" className="ml-px mr-[3px] grid h-[22px] w-[13px] place-items-center bg-white">
          <Chevron />
        </button>
        <span className="h-8 w-px bg-[#999]" />
        <div className="ml-[125px] grid w-[225px] items-center">
          <select
            aria-label="过滤器"
            defaultValue="几何"
            className="h-[30px] w-full appearance-none border border-[#99c] bg-white pl-[7px] text-base leading-[22px] outline-none [grid-area:1/1]"
          >
            <option>几何</option>
          </select>
          <span className="pointer-events-none grid h-[28px] w-4 place-items-center justify-self-end border-l border-[#99c] [grid-area:1/1]">
            <Chevron />
          </span>
        </div>
      </div>
    </footer>
  );
}

/* ---------- capture tool window ---------- */

function CaptureButton({ label, disabled, className }: { label: string; disabled?: boolean; className: string }) {
  return (
    <button
      type="button"
      disabled={disabled}
      className={`shrink-0 whitespace-nowrap border-b-2 border-l border-r-2 border-t border-b-[#777] border-l-[#ccc] border-r-[#777] border-t-[#ccc] ${
        disabled ? "text-[#999]" : "text-black"
      } ${className}`}
    >
      {label}
    </button>
  );
}

function CaptureCheck({ label, checked }: { label: string; checked?: boolean }) {
  return (
    <label className="flex h-[22px] items-center gap-[5px] pl-0.5">
      <span className="grid shrink-0">
        <input
          type="checkbox"
          defaultChecked={checked}
          className="peer size-[15px] appearance-none border border-b-[#ccc] border-l-black border-r-[#ccc] border-t-[#555] bg-white [grid-area:1/1]"
        />
        <svg
          aria-hidden="true"
          width="15"
          height="15"
          viewBox="0 0 15 15"
          className="pointer-events-none hidden [grid-area:1/1] peer-checked:block"
        >
          <path d="M3 7l3 4 6-7" fill="none" stroke="#000" strokeWidth="1.800" />
        </svg>
      </span>
      {label}
    </label>
  );
}

function CaptureLegend({ label }: { label: string }) {
  return (
    <h3 className="flex h-[15px] items-center gap-[3px]">
      <span className="h-px w-2.5 bg-black" />
      {label}
      <span className="h-px flex-1 bg-black" />
    </h3>
  );
}

function CaptureSelect({ label, value, className }: { label: string; value: string; className: string }) {
  return (
    <label className="flex h-[22px] items-center">
      {label}
      <span className={`grid items-center ${className}`}>
        <select
          defaultValue={value}
          className="h-[17px] w-full appearance-none border border-b-2 border-r-2 border-black bg-white pl-3 text-[13px] leading-[14px] outline-none [grid-area:1/1]"
        >
          <option>{value}</option>
        </select>
        <svg aria-hidden="true" width="7" height="7" viewBox="0 0 7 7" className="pointer-events-none mr-1 justify-self-end [grid-area:1/1]">
          <path d="M0 0h7L3.500 7z" />
        </svg>
      </span>
    </label>
  );
}

function CaptureWindow() {
  return (
    <div className="absolute right-0 top-0 w-36 overflow-hidden border-b border-l border-[#09b] bg-white pl-[3px] text-[13px] font-bold leading-[15px] text-black">
      <svg aria-hidden="true" width="140" height="4" viewBox="0 0 140 4" className="block" fill="none" stroke="#000">
        <path d="M0 1h12M2 3l3-2 3 2 4-2v3" strokeWidth="1.500" />
        <path d="M71 0v2h9V0" stroke="#ccc" />
        <path d="M122 2l3-2M131 2l-3-2" />
      </svg>
      <nav className="flex h-[33px] items-center gap-4 pl-1 pt-[3px] font-['Open_Sans','Noto_Sans_CJK_SC',sans-serif] font-semibold">
        <button type="button">文件(F)</button>
        <button type="button" className="font-normal text-[#666]">
          编辑(E)
        </button>
      </nav>
      <p className="flex h-[25px] items-center justify-center border-y-3 border-double border-black pl-2.5 text-xs">Unregistered Copy</p>
      <div className="mt-[3px] flex gap-[3px]">
        <CaptureButton label="开始" disabled className="h-[22px] w-11" />
        <CaptureButton label="捕捉" disabled className="h-[22px] w-11" />
        <CaptureButton label="停止" className="h-[22px] w-11" />
      </div>
      <p className="mb-4 mt-px">0 帧 (0 字节)</p>
      <CaptureLegend label="捕捉区域" />
      <p>尺寸：1658x989</p>
      <p>左上角：3,21</p>
      <div className="flex items-center gap-[5px] whitespace-nowrap">
        <CaptureCheck label="显示区域" />
        <CaptureButton label="选择区域" disabled className="h-[21px] w-[70px]" />
      </div>
      <CaptureButton label="刷新屏幕" className="mt-[3px] h-[21px] w-[71px]" />
      <div className="mt-[19px]">
        <CaptureLegend label="捕捉选项" />
        <div className="-my-0.5">
          <CaptureSelect label="帧数/秒：" value="3 fps" className="ml-[3px] w-[63px]" />
        </div>
        <div className="pt-px">
          <CaptureCheck label="透明" checked />
          <CaptureCheck label="记录时间信息" checked />
          <CaptureCheck label="循环" checked />
          <CaptureCheck label="描边" checked />
          <CaptureCheck label="捕捉光标" checked />
          <CaptureCheck label="Explorer 2.0 兼容" />
        </div>
        <CaptureSelect label="录制比例：" value="100%" className="ml-0.5 w-[58px]" />
      </div>
    </div>
  );
}

export default function App() {
  return (
    <div className="relative flex min-h-screen flex-col overflow-hidden border border-black bg-[#cbcbcb] font-['Open_Sans','Noto_Sans_CJK_SC',sans-serif] text-[#333]">
      <Header />
      <Ribbon />
      <div className="flex flex-1">
        <ModelTree />
        <Viewport />
      </div>
      <StatusBar />
      <CaptureWindow />
    </div>
  );
}
